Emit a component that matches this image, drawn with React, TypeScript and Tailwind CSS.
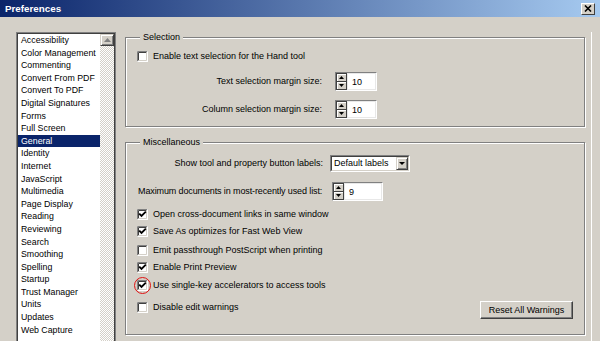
import React from "react";

const items = [
  "Accessibility",
  "Color Management",
  "Commenting",
  "Convert From PDF",
  "Convert To PDF",
  "Digital Signatures",
  "Forms",
  "Full Screen",
  "General",
  "Identity",
  "Internet",
  "JavaScript",
  "Multimedia",
  "Page Display",
  "Reading",
  "Reviewing",
  "Search",
  "Smoothing",
  "Spelling",
  "Startup",
  "Trust Manager",
  "Units",
  "Updates",
  "Web Capture",
];

function Check({ checked }: { checked?: boolean }) {
  return (
    <svg width="11" height="11" viewBox="0 0 11 11" className="shrink-0 block">
      <rect x="0" y="0" width="11" height="11" fill="#fff" />
      <path d="M0.5 10.5V0.5H10.5" stroke="#808080" fill="none" />
      <path d="M1.5 9.5V1.5H9.5" stroke="#404040" fill="none" />
      <path d="M0.5 10.5H10.5V0.5" stroke="#ffffff" fill="none" />
      <path d="M1.5 9.5H9.5V1.5" stroke="#d4d0c8" fill="none" />
      {checked && (
        <path
          d="M2.8 5.2 L4.5 6.9 L8.2 3.2"
          stroke="#000"
          strokeWidth="1.8"
          fill="none"
          strokeLinecap="square"
        />
      )}
    </svg>
  );
}

function CheckRow({
  label,
  checked,
  className = "",
  circle,
}: {
  label: string;
  checked?: boolean;
  className?: string;
  circle?: boolean;
}) {
  return (
    <div className={`flex items-center h-[11px] ${className}`}>
      <div className="relative">
        <Check checked={checked} />
        {circle && (
          <div className="absolute -left-[3px] -top-[3px] w-[17px] h-[17px] rounded-full border-[1.5px] border-[#e01010]" />
        )}
      </div>
      <span className="ml-[5px] whitespace-nowrap">{label}</span>
    </div>
  );
}

function Spin({ value, fieldW }: { value: string; fieldW: number }) {
  return (
    <div className="flex h-[19px] border border-t-[#808080] border-l-[#808080] border-b-white border-r-white">
      <div className="w-[11px] flex flex-col border border-[#404040] bg-[#d4d0c8]">
        <div className="flex-1 flex items-center justify-center border-b border-[#404040] shadow-[inset_1px_1px_0_#fff]">
          <svg width="5" height="3" viewBox="0 0 5 3">
            <path d="M0 3 L2.5 0 L5 3Z" fill="#000" />
          </svg>
        </div>
        <div className="flex-1 flex items-center justify-center shadow-[inset_1px_1px_0_#fff]">
          <svg width="5" height="3" viewBox="0 0 5 3">
            <path d="M0 0 L2.5 3 L5 0Z" fill="#000" />
          </svg>
        </div>
      </div>
      <div
        className="bg-white pl-[4px] leading-[16px] border border-[#e8e8e8]"
        style={{ width: fieldW }}
      >
        {value}
      </div>
    </div>
  );
}

function Group({
  title,
  className = "",
  children,
}: {
  title: string;
  className?: string;
  children: React.ReactNode;
}) {
  return (
    <div
      className={`relative border border-[#808080] shadow-[1px_1px_0_#fff,inset_1px_1px_0_#fff] px-[11px] ${className}`}
    >
      <div className="absolute -top-[6px] left-[14px] bg-[#d4d0c8] px-[3px] leading-[11px]">
        {title}
      </div>
      {children}
    </div>
  );
}

export default function App() {
  return (
    <div
      className="w-[600px] h-[341px] bg-[#d4d0c8] overflow-hidden text-[9px] text-black"
      style={{ fontFamily: '"Liberation Sans", Arial, sans-serif' }}
    >
      {/* Title bar */}
      <div className="h-[17px] flex items-center justify-between pl-[5px] pr-[5px] bg-[linear-gradient(to_right,#0a246a,#a6caf0)]">
        <span className="text-white font-bold text-[9.8px] leading-none">Preferences</span>
        <div className="w-[14px] h-[12px] bg-[#d4d0c8] border border-t-white border-l-white border-b-[#404040] border-r-[#404040] flex items-center justify-center">
          <svg width="8" height="7" viewBox="0 0 8 7">
            <path d="M1 0.5 L7 6.5 M7 0.5 L1 6.5" stroke="#000" strokeWidth="1.6" />
          </svg>
        </div>
      </div>

      <div className="flex pl-[16px] pt-[15px]">
        {/* List */}
        <div className="w-[100px] h-[330px] border border-[#808080] shrink-0">
          <div className="h-full border border-[#404040] flex bg-white">
            <div className="w-[82px] flex flex-col text-[8.8px]">
              {items.map((it) => (
                <div
                  key={it}
                  className={`h-[12.6px] leading-[12.6px] pl-[3px] whitespace-nowrap ${
                    it === "General" ? "bg-[#0a246a] text-white" : ""
                  }`}
                >
                  {it}
                </div>
              ))}
            </div>
            <div className="w-[14px] bg-[repeating-conic-gradient(#d4d0c8_0_25%,#ffffff_0_50%)] bg-[length:2px_2px]">
              <div className="h-[12px] bg-[#d4d0c8] border border-t-[#d4d0c8] border-l-[#d4d0c8] border-b-[#404040] border-r-[#404040] shadow-[inset_1px_1px_0_#fff,inset_-1px_-1px_0_#808080] flex items-center justify-center">
                <svg width="7" height="4" viewBox="0 0 7 4">
                  <path d="M0 4 L3.5 0 L7 4Z" fill="#808080" />
                </svg>
              </div>
            </div>
          </div>
        </div>

        {/* Right side */}
        <div className="ml-[9px] mt-[5px] w-[460px] flex flex-col shrink-0">
          <Group title="Selection" className="h-[90px]">
            <CheckRow label="Enable text selection for the Hand tool" className="mt-[13px]" />
            <div className="flex items-center mt-[10px]">
              <div className="w-[185px] text-right whitespace-nowrap">Text selection margin size:</div>
              <div className="ml-[13px]">
                <Spin value="10" fieldW={29} />
              </div>
            </div>
            <div className="flex items-center mt-[9px]">
              <div className="w-[185px] text-right whitespace-nowrap">Column selection margin size:</div>
              <div className="ml-[13px]">
                <Spin value="10" fieldW={29} />
              </div>
            </div>
          </Group>

          <Group title="Miscellaneous" className="h-[193px] mt-[15px]">
            <div className="flex items-center mt-[12px]">
              <div className="w-[186px] text-right whitespace-nowrap">Show tool and property button labels:</div>
              <div className="ml-[7px] w-[80px] h-[17px] flex border border-t-[#808080] border-l-[#808080] border-b-white border-r-white">
                <div className="flex-1 flex border border-t-[#404040] border-l-[#404040] border-b-[#d4d0c8] border-r-[#d4d0c8] bg-white">
                  <div className="flex-1 pl-[2px] leading-[13px] whitespace-nowrap">Default labels</div>
                  <div className="w-[12px] bg-[#d4d0c8] border border-t-[#d4d0c8] border-l-[#d4d0c8] border-b-[#404040] border-r-[#404040] shadow-[inset_1px_1px_0_#fff,inset_-1px_-1px_0_#808080] flex items-center justify-center">
                    <svg width="6" height="3" viewBox="0 0 6 3">
                      <path d="M0 0 L3 3 L6 0Z" fill="#000" />
                    </svg>
                  </div>
                </div>
              </div>
            </div>
            <div className="flex items-center mt-[10px]">
              <div className="w-[186px] whitespace-nowrap pl-[1px] tracking-[-0.12px]">Maximum documents in most-recently used list:</div>
              <div className="ml-[9px]">
                <Spin value="9" fieldW={38} />
              </div>
            </div>
            <CheckRow label="Open cross-document links in same window" checked className="mt-[8px]" />
            <CheckRow label="Save As optimizes for Fast Web View" checked className="mt-[6px]" />
            <CheckRow label="Emit passthrough PostScript when printing" className="mt-[8px]" />
            <CheckRow label="Enable Print Preview" checked className="mt-[6px]" />
            <CheckRow label="Use single-key accelerators to access tools" checked circle className="mt-[7px]" />
            <div className="flex justify-between items-start mt-[10px]">
              <CheckRow label="Disable edit warnings" className="mt-[1px]" />
              <button className="w-[93px] h-[18px] bg-[#d4d0c8] border border-t-white border-l-white border-b-[#404040] border-r-[#404040] shadow-[inset_-1px_-1px_0_#808080] leading-[14px] text-center">
                Reset All Warnings
              </button>
            </div>
          </Group>
        </div>
        <div className="ml-[6px] w-px h-[324px] bg-white" />
      </div>
    </div>
  );
}
